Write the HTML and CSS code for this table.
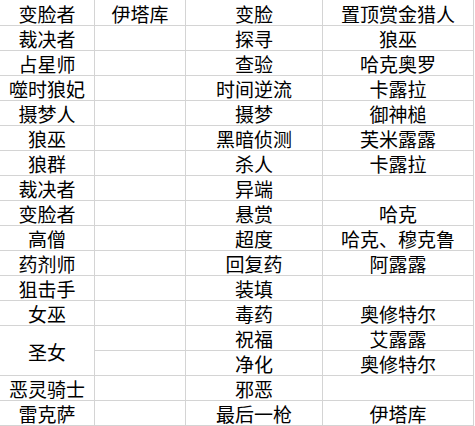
FILE: index.html
```html
<!DOCTYPE html>
<html lang="zh">
<head>
<meta charset="utf-8">
<link rel="stylesheet" href="styles.css">
</head>
<body>
<div class="sheet">
  <div class="c">变脸者</div><div class="c">伊塔库</div><div class="c">变脸</div><div class="c">置顶赏金猎人</div>
  <div class="c">裁决者</div><div class="c"></div><div class="c">探寻</div><div class="c">狼巫</div>
  <div class="c">占星师</div><div class="c"></div><div class="c">查验</div><div class="c">哈克奥罗</div>
  <div class="c">噬时狼妃</div><div class="c"></div><div class="c">时间逆流</div><div class="c">卡露拉</div>
  <div class="c">摄梦人</div><div class="c"></div><div class="c">摄梦</div><div class="c">御神槌</div>
  <div class="c">狼巫</div><div class="c"></div><div class="c">黑暗侦测</div><div class="c">芙米露露</div>
  <div class="c">狼群</div><div class="c"></div><div class="c">杀人</div><div class="c">卡露拉</div>
  <div class="c">裁决者</div><div class="c"></div><div class="c">异端</div><div class="c"></div>
  <div class="c">变脸者</div><div class="c"></div><div class="c">悬赏</div><div class="c">哈克</div>
  <div class="c">高僧</div><div class="c"></div><div class="c">超度</div><div class="c">哈克、穆克鲁</div>
  <div class="c">药剂师</div><div class="c"></div><div class="c">回复药</div><div class="c">阿露露</div>
  <div class="c">狙击手</div><div class="c"></div><div class="c">装填</div><div class="c"></div>
  <div class="c">女巫</div><div class="c"></div><div class="c">毒药</div><div class="c">奥修特尔</div>
  <div class="c span2">圣女</div><div class="c"></div><div class="c">祝福</div><div class="c">艾露露</div>
  <div class="c"></div><div class="c">净化</div><div class="c">奥修特尔</div>
  <div class="c">恶灵骑士</div><div class="c"></div><div class="c">邪恶</div><div class="c"></div>
  <div class="c">雷克萨</div><div class="c"></div><div class="c">最后一枪</div><div class="c">伊塔库</div>
</div>
</body>
</html>
```
FILE: styles.css
```css
html, body {
  margin: 0;
  padding: 0;
  background: #ffffff;
}
.sheet {
  display: grid;
  grid-template-columns: 94px 90px 136px 150px;
  grid-template-rows: 25px repeat(16, 24px);
  gap: 1px;
  padding: 0 1px 1px 0;
  width: max-content;
  background: #d4d4d4;
  font-family: "Noto Sans CJK SC", "Microsoft YaHei", sans-serif;
  font-size: 19px;
  font-weight: 400;
  color: #000000;
}
.c {
  background: #ffffff;
  display: flex;
  align-items: center;
  justify-content: center;
  line-height: 1;
  white-space: nowrap;
  padding-top: 1px;
}
.span2 {
  grid-row: span 2;
}
```
